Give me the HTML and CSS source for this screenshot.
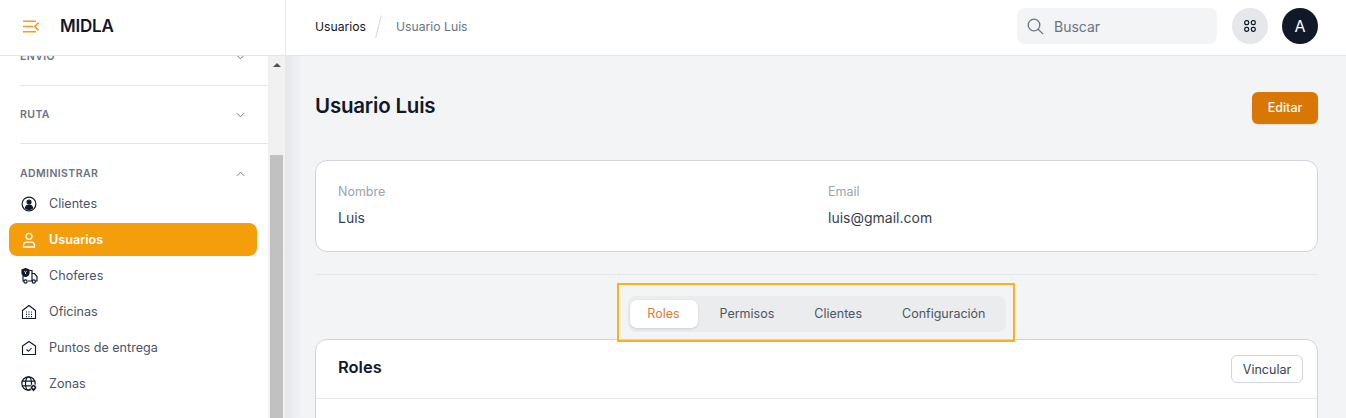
FILE: index.html
```html
<!DOCTYPE html>
<html lang="es">
<head>
  <meta charset="UTF-8">
  <title>MIDLA - Usuario Luis</title>
  <link rel="stylesheet" href="styles.css">
</head>
<body>
  <div class="app">
    <!-- Sidebar -->
    <aside class="sidebar">
      <div class="brand">
        <svg class="brand-icon" width="18" height="13" viewBox="0 0 18 13" fill="none" stroke="#f59e0b" stroke-width="1.6">
          <path d="M1 1.2h13M1 6.5h10M1 11.8h13M16.5 2.500l-3.600 4 3.600 4"/>
        </svg>
        <span class="brand-name">MIDLA</span>
      </div>
      <div class="side-body">
        <nav class="nav">
          <div class="nav-group group-clipped">
            <span>ENVIO</span>
            <svg width="9" height="6" viewBox="0 0 10 6" fill="none" stroke="#6b7280" stroke-width="1.1"><path d="M1 1l4 4 4-4"/></svg>
          </div>
          <div class="nav-group">
            <span>RUTA</span>
            <svg width="9" height="6" viewBox="0 0 10 6" fill="none" stroke="#6b7280" stroke-width="1.1"><path d="M1 1l4 4 4-4"/></svg>
          </div>
          <div class="nav-group open">
            <span>ADMINISTRAR</span>
            <svg width="9" height="6" viewBox="0 0 10 6" fill="none" stroke="#6b7280" stroke-width="1.1"><path d="M1 5l4-4 4 4"/></svg>
          </div>
          <a class="nav-item">
            <svg width="16" height="16" viewBox="0 0 16 16" fill="none" stroke="#111827" stroke-width="1.2"><circle cx="8" cy="8" r="6.9"/><circle cx="8" cy="6" r="2" fill="#111827"/><path d="M4.4 12c.4-2 1.800-3 3.600-3s3.200 1 3.600 3c-1 .9-2.200 1.400-3.600 1.400S5.400 12.900 4.400 12z" fill="#111827"/></svg>
            Clientes
          </a>
          <a class="nav-item active">
            <svg width="16" height="16" viewBox="0 0 16 16" fill="none" stroke="#fff" stroke-width="1.3"><circle cx="8" cy="4.300" r="3"/><path d="M2.500 15v-1.500c0-2 1.500-3.300 3.500-3.300h4c2 0 3.500 1.300 3.500 3.300V15z"/></svg>
            Usuarios
          </a>
          <a class="nav-item">
            <svg class="wide-icon" width="17" height="16" viewBox="0 0 17 16" fill="none" stroke="#111827" stroke-width="1.200"><path d="M8.500 2.500h2.500v10.500H7M3 13H2V8M11 5.500h2.500l2.500 3v4.500h-1.500M11 13h.800"/><circle cx="4.500" cy="13.500" r="1.600"/><circle cx="12.800" cy="13.500" r="1.600"/><path d="M4.500.600l3.500 1.300v3c0 1.700-1.500 2.900-3.500 3.500C2.500 7.800 1 6.600 1 4.900v-3z" fill="#111827"/><path d="M3.200 3l1.300 1.200L5.800 3M4.500 4.200v1.800" stroke="#fff" stroke-width=".9"/></svg>
            Choferes
          </a>
          <a class="nav-item">
            <svg width="16" height="16" viewBox="0 0 16 16" fill="none" stroke="#111827" stroke-width="1.100"><path d="M1.500 14.500V6.500L8 1.500l6.500 5v8z" stroke-linejoin="round"/><path d="M5 8h1M7.500 8h1M10 8h1M5 10.300h1M7.500 10.300h1M10 10.300h1M5 12.600h1M7.500 12.600h1M10 12.600h1" stroke-width="1.200"/></svg>
            Oficinas
          </a>
          <a class="nav-item">
            <svg width="16" height="16" viewBox="0 0 16 16" fill="none" stroke="#111827" stroke-width="1.100"><path d="M1.500 14.500V6L8 1.500 14.500 6v8.500z" stroke-linejoin="round"/><path d="M5.500 9.500l2 1.800 3-3.300"/></svg>
            Puntos de entrega
          </a>
          <a class="nav-item">
            <svg class="wide-icon" width="17" height="16" viewBox="0 0 17 16" fill="none" stroke="#111827" stroke-width="1.200"><circle cx="7.500" cy="7.500" r="6.700"/><ellipse cx="7.500" cy="7.500" rx="3" ry="6.700"/><path d="M1 5.200h13M1 9.800h13"/><path d="M12.500 8.500a3 3 0 0 1 3 3c0 1.800-1.700 3-3 4.200-1.300-1.200-3-2.400-3-4.200a3 3 0 0 1 3-3z" fill="#111827" stroke="#fff" stroke-width=".8"/><circle cx="12.500" cy="11.500" r="1" fill="#fff" stroke="none"/></svg>
            Zonas
          </a>
        </nav>
        <div class="scrollbar">
          <div class="scroll-arrow"></div>
          <div class="scroll-thumb"></div>
        </div>
      </div>
    </aside>

    <div class="content">
      <!-- Top bar -->
      <header class="topbar">
        <div class="crumbs">
          <span class="crumb-link">Usuarios</span>
          <span class="crumb-sep"></span>
          <span class="crumb-current">Usuario Luis</span>
        </div>
        <div class="top-actions">
          <div class="search">
            <svg width="17" height="17" viewBox="0 0 17 17" fill="none" stroke="#6b7280" stroke-width="1.300"><circle cx="7" cy="7" r="5.800"/><path d="M11.200 11.200l4.900 4.900"/></svg>
            <span>Buscar</span>
          </div>
          <div class="apps-btn">
            <svg width="12" height="12" viewBox="0 0 12 12" fill="none" stroke="#111827" stroke-width="1.200"><rect x=".7" y=".7" width="4" height="4" rx="1.700"/><rect x="7.300" y=".7" width="4" height="4" rx="1.700"/><rect x=".7" y="7.300" width="4" height="4" rx="1.700"/><rect x="7.300" y="7.300" width="4" height="4" rx="1.700"/></svg>
          </div>
          <div class="avatar">A</div>
        </div>
      </header>

      <main class="main">
        <div class="page-head">
          <h1>Usuario Luis</h1>
          <button class="btn-primary">Editar</button>
        </div>

        <section class="card info-card">
          <div class="field">
            <div class="field-label">Nombre</div>
            <div class="field-value">Luis</div>
          </div>
          <div class="field">
            <div class="field-label">Email</div>
            <div class="field-value">luis@gmail.com</div>
          </div>
        </section>

        <hr class="divider">

        <div class="tabs-row">
          <div class="tabs-mark">
            <div class="tabs">
              <div class="tab active">Roles</div>
              <div class="tab">Permisos</div>
              <div class="tab">Clientes</div>
              <div class="tab">Configuración</div>
            </div>
          </div>
        </div>

        <section class="card roles-card">
          <div class="roles-head">
            <h2>Roles</h2>
            <button class="btn-outline">Vincular</button>
          </div>
        </section>
      </main>
    </div>
  </div>
</body>
</html>
```

FILE: styles.css
```css
/* General reset */
* {
  margin: 0;
  padding: 0;
  box-sizing: border-box;
}

html, body {
  height: 100%;
  overflow: hidden;
}

body {
  font-family: "Inter", Arial, sans-serif;
  background: #f3f4f6;
  color: #111827;
}

.app {
  display: flex;
  height: 418px;
}

/* Sidebar */
.sidebar {
  width: 286px;
  flex-shrink: 0;
  background: #fff;
  border-right: 1px solid #e5e7eb;
  display: flex;
  flex-direction: column;
}

.brand {
  height: 56px;
  flex-shrink: 0;
  display: flex;
  align-items: center;
  padding: 0 0 3px 22px;
  gap: 20px;
  border-bottom: 1px solid #e5e7eb;
}

.brand-name {
  font-size: 17px;
  font-weight: 600;
  letter-spacing: -0.2px;
}

.side-body {
  flex: 1;
  display: flex;
  min-height: 0;
}

.nav {
  flex: 1;
  overflow: hidden;
  padding: 0 11px 0 9px;
}

.nav-group {
  height: 58px;
  margin-left: 11px;
  margin-right: -11px;
  padding: 0 23px 0 0;
  display: flex;
  align-items: center;
  justify-content: space-between;
  border-bottom: 1px solid #e5e7eb;
  font-size: 10.5px;
  font-weight: 600;
  letter-spacing: 0.4px;
  color: #6b7280;
}

.group-clipped {
  margin-top: -28px;
}

.nav-group.open {
  border-bottom: none;
  height: 59px;
}

.nav-item {
  height: 33px;
  margin-bottom: 3px;
  padding-left: 12px;
  display: flex;
  align-items: center;
  gap: 12px;
  border-radius: 8px;
  font-size: 12.6px;
  color: #4b5563;
}

.nav-item svg {
  flex-shrink: 0;
}

.nav-item .wide-icon {
  margin-right: -1px;
}

.nav-group.open + .nav-item {
  margin-top: -16px;
}

.nav-item.active {
  background: #f59e0b;
  color: #fff;
  font-weight: 600;
}

.scrollbar {
  width: 17px;
  flex-shrink: 0;
  background: #f1f1f1;
  display: flex;
  flex-direction: column;
  align-items: center;
}

.scroll-arrow {
  margin-top: 7px;
  border-left: 4px solid transparent;
  border-right: 4px solid transparent;
  border-bottom: 4px solid #505050;
}

.scroll-thumb {
  width: 13px;
  flex: 1;
  margin-top: 88px;
  background: #c1c1c1;
}

/* Top bar */
.content {
  flex: 1;
  min-width: 0;
  display: flex;
  flex-direction: column;
}

.topbar {
  height: 56px;
  flex-shrink: 0;
  background: #fff;
  border-bottom: 1px solid #e5e7eb;
  padding: 0 28px 3px 29px;
  display: flex;
  align-items: center;
  justify-content: space-between;
}

.crumbs {
  display: flex;
  align-items: center;
  font-size: 12.2px;
}

.crumb-current {
  color: #6b7280;
}

.crumb-sep {
  width: 1px;
  height: 23px;
  margin: 0 17px 0 12px;
  background: #d1d5db;
  transform: rotate(14deg);
}

.top-actions {
  display: flex;
  align-items: center;
}

.search {
  width: 200px;
  height: 36px;
  margin-right: 15px;
  padding-left: 10px;
  display: flex;
  align-items: center;
  gap: 10px;
  background: #f3f4f6;
  border-radius: 8px;
  font-size: 14px;
  color: #6b7280;
}

.apps-btn, .avatar {
  width: 36px;
  height: 36px;
  border-radius: 50%;
  display: flex;
  align-items: center;
  justify-content: center;
}

.apps-btn {
  background: #e5e7eb;
  margin-right: 14px;
}

.avatar {
  background: #111827;
  color: #fff;
  font-size: 16px;
  font-weight: 400;
}

/* Main */
.main {
  flex: 1;
  overflow: hidden;
  padding: 36px 28px 0 29px;
  background: linear-gradient(to right, #e5e7eb, #f3f4f6 16px);
}

.page-head {
  height: 32px;
  margin-bottom: 36px;
  display: flex;
  align-items: center;
  justify-content: space-between;
}

h1 {
  font-size: 20.5px;
  font-weight: 600;
  letter-spacing: -0.2px;
  padding-bottom: 5px;
}

.btn-primary {
  width: 66px;
  height: 32px;
  padding-bottom: 2px;
  border: none;
  border-radius: 6px;
  background: #d97706;
  color: #fff;
  font: 500 12.5px "Inter", Arial, sans-serif;
  box-shadow: 0 1px 2px rgba(0, 0, 0, 0.1);
}

.card {
  background: #fff;
  border: 1px solid #d1d5db;
  border-radius: 12px;
}

.info-card {
  height: 92px;
  padding: 23px 22px 0;
  display: grid;
  grid-template-columns: 490px 1fr;
}

.field-label {
  font-size: 12.5px;
  color: #9ca3af;
  margin-bottom: 10px;
}

.field-value {
  font-size: 14px;
  color: #374151;
}

.divider {
  border: none;
  border-top: 1px solid #e5e7eb;
  margin-top: 22px;
}

.tabs-row {
  display: flex;
  justify-content: center;
  margin: 8px 2px -3px 0;
}

.tabs-mark {
  width: 398px;
  height: 59px;
  border: 2px solid #fbb01d;
  padding: 11px 7px 0 9px;
}

.tabs {
  height: 36px;
  padding: 4px 0 4px 2px;
  display: flex;
  border-radius: 8px;
  background: #ebecee;
  font-size: 12.5px;
  color: #4b5563;
}

.tab {
  flex-shrink: 0;
  height: 28px;
  padding: 0 20px 1px;
  display: flex;
  align-items: center;
  justify-content: center;
  border-radius: 7px;
  white-space: nowrap;
}

.tab.active {
  width: 68px;
  margin-right: 2px;
  padding: 0 0 1px;
  background: #fff;
  color: #dd7a32;
  box-shadow: 0 1px 3px rgba(0, 0, 0, 0.12);
}

.roles-card {
  height: 100px;
}

.roles-head {
  height: 59px;
  padding: 0 14px 0 22px;
  display: flex;
  align-items: center;
  justify-content: space-between;
  border-bottom: 1px solid #e5e7eb;
}

h2 {
  font-size: 16.5px;
  font-weight: 600;
  padding-bottom: 5px;
}

.btn-outline {
  width: 72px;
  height: 28px;
  background: #fff;
  border: 1px solid #d1d5db;
  border-radius: 6px;
  color: #374151;
  font: 400 12.5px "Inter", Arial, sans-serif;
}
```
